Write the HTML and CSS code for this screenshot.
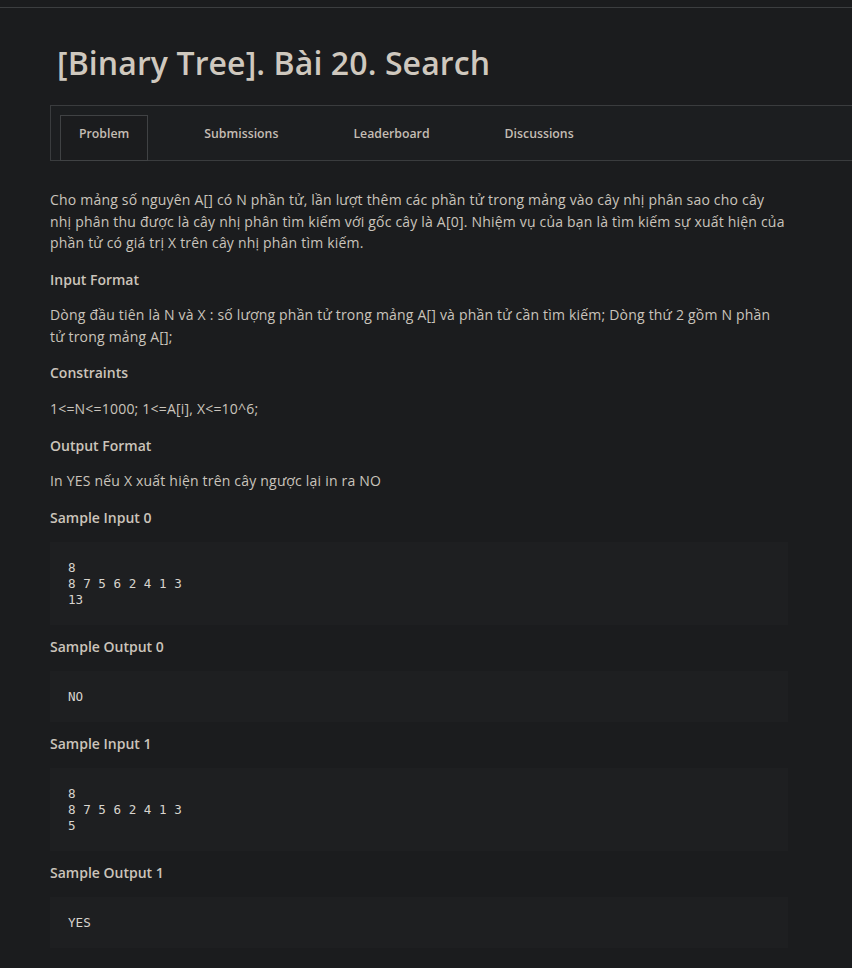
FILE: index.html
```html
<!DOCTYPE html>
<html lang="vi">
<head>
<meta charset="utf-8">
<title>[Binary Tree]. Bài 20. Search</title>
<link rel="stylesheet" href="styles.css">
</head>
<body>
<div class="topbar"></div>
<main class="page">
  <h1 class="title">[Binary Tree]. Bài 20. Search</h1>
  <nav class="tabs">
    <div class="tab active">Problem</div>
    <div class="tab">Submissions</div>
    <div class="tab">Leaderboard</div>
    <div class="tab">Discussions</div>
  </nav>
  <section class="content">
    <p>Cho mảng số nguyên A[] có N phần tử, lần lượt thêm các phần tử trong mảng vào cây nhị phân sao cho cây nhị phân thu được là cây nhị phân tìm kiếm với gốc cây là A[0]. Nhiệm vụ của bạn là tìm kiếm sự xuất hiện của phần tử có giá trị X trên cây nhị phân tìm kiếm.</p>
    <h2>Input Format</h2>
    <p>Dòng đầu tiên là N và X : số lượng phần tử trong mảng A[] và phần tử cần tìm kiếm; Dòng thứ 2 gồm N phần tử trong mảng A[];</p>
    <h2>Constraints</h2>
    <p>1&lt;=N&lt;=1000; 1&lt;=A[i], X&lt;=10^6;</p>
    <h2>Output Format</h2>
    <p>In YES nếu X xuất hiện trên cây ngược lại in ra NO</p>
    <h2>Sample Input 0</h2>
    <pre class="sample">8
8 7 5 6 2 4 1 3
13</pre>
    <h2>Sample Output 0</h2>
    <pre class="sample">NO</pre>
    <h2>Sample Input 1</h2>
    <pre class="sample">8
8 7 5 6 2 4 1 3
5</pre>
    <h2>Sample Output 1</h2>
    <pre class="sample">YES</pre>
  </section>
</main>
</body>
</html>
```

FILE: styles.css
```css
html, body {
  margin: 0;
  padding: 0;
  background: #1b1c1e;
  overflow-x: hidden;
}
body {
  font-family: "Open Sans", "Noto Sans", sans-serif;
  color: #cac4bc;
}
.topbar {
  height: 7px;
  border-bottom: 1px solid #3c3e40;
}
.page {
  padding: 0 0 20px 50px;
}
.title {
  margin: 0;
  padding: 33px 0 0 7px;
  height: 64px;
  font-size: 32px;
  line-height: 44px;
  font-weight: 600;
  letter-spacing: 0.1px;
  color: #cfc8be;
}
.tabs {
  display: flex;
  gap: 37px;
  padding: 9px 0 0 9px;
  border: 1px solid #3a3c3e;
  border-right: none;
  background: #1c1e20;
  box-sizing: border-box;
  height: 56px;
}
.tab {
  padding: 9px 18px 18px;
  font-size: 12.3px;
  line-height: 18px;
  font-weight: 600;
  color: #c4bdb4;
  border: 1px solid transparent;
  margin-bottom: -1px;
}
.tab.active {
  border-color: #404244;
  background: #1b1c1e;
}
.content {
  width: 738px;
  padding-top: 28px;
}
.content p {
  margin: 0 0 15.2px;
  font-size: 14px;
  line-height: 21.5px;
  letter-spacing: 0.2px;
}
.content h2 {
  margin: 0 0 14px;
  font-size: 14px;
  line-height: 21.5px;
  font-weight: 600;
  color: #cbc4bb;
}
.sample {
  margin: 0 0 10.5px;
  padding: 17.5px 18px;
  background: #1e1f21;
  font-family: "DejaVu Sans Mono", monospace;
  font-size: 12.6px;
  line-height: 16px;
  color: #d8d4ce;
}
```
